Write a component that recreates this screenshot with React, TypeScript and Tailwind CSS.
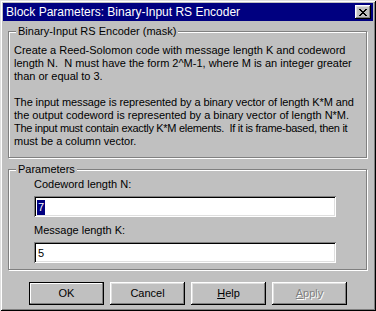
import type { ReactNode } from "react";

const font = "font-['Liberation_Sans',Arial,sans-serif]";

const raised =
  "shadow-[inset_-1px_-1px_0_#000,inset_1px_1px_0_#fff,inset_-2px_-2px_0_#808080,inset_2px_2px_0_#dfdfdf]";

const lines = [
  "Create a Reed-Solomon code with message length K and codeword",
  "length N.  N must have the form 2^M-1, where M is an integer greater",
  "than or equal to 3.",
  "",
  "The input message is represented by a binary vector of length K*M and",
  "the output codeword is represented by a binary vector of length N*M.",
  "The input must contain exactly K*M elements.  If it is frame-based, then it",
  "must be a column vector.",
];

function GroupBox({
  label,
  className,
  children,
}: {
  label: string;
  className: string;
  children: ReactNode;
}) {
  return (
    <div
      className={`relative ml-[5px] mr-[6px] border border-[#808080] shadow-[1px_1px_0_#fff,inset_1px_1px_0_#fff] ${className}`}
    >
      <span className="absolute left-[7px] top-[-7px] bg-[#c0c0c0] px-[2px] leading-[13px]">
        {label}
      </span>
      {children}
    </div>
  );
}

function Field({ label, value, selected }: { label: string; value: string; selected?: boolean }) {
  return (
    <div className="ml-[25px] w-[302px]">
      <div className="leading-[13px]">{label}</div>
      <div className="mt-[5px] h-[21px] bg-white px-[3px] pt-[3px] shadow-[inset_1px_1px_0_#808080,inset_-1px_-1px_0_#fff,inset_2px_2px_0_#000,inset_-2px_-2px_0_#dfdfdf]">
        <span
          className={`inline-block h-[15px] px-[1px] leading-[15px] ${
            selected ? "bg-[#000080] text-white" : "text-black"
          }`}
        >
          {value}
        </span>
      </div>
    </div>
  );
}

function Button({
  children,
  isDefault,
  disabled,
}: {
  children: ReactNode;
  isDefault?: boolean;
  disabled?: boolean;
}) {
  return (
    <div
      className={`flex h-[23px] w-[75px] items-center justify-center ${
        isDefault
          ? "border border-black shadow-[inset_-1px_-1px_0_#808080,inset_1px_1px_0_#fff]"
          : raised
      } ${disabled ? "text-[#808080] [text-shadow:1px_1px_0_#fff]" : "text-black"}`}
    >
      {children}
    </div>
  );
}

export default function App() {
  return (
    <div
      className={`flex h-[311px] w-[376px] flex-col bg-[#c0c0c0] p-[3px] text-[11px] text-black ${font} shadow-[inset_1px_1px_0_#dfdfdf,inset_-1px_-1px_0_#000,inset_2px_2px_0_#fff,inset_-2px_-2px_0_#808080]`}
    >
      <div className="flex h-[18px] items-center justify-between bg-[#000080] pl-[3px] pr-[2px] text-white">
        <span className="text-[12px] leading-[18px]">Block Parameters: Binary-Input RS Encoder</span>
        <div className={`flex h-[14px] w-[16px] items-center justify-center bg-[#c0c0c0] ${raised}`}>
          <svg width="8" height="7" viewBox="0 0 8 7" shapeRendering="crispEdges">
            <path
              d="M0 0h2v1h-2zM6 0h2v1h-2zM1 1h2v1h-2zM5 1h2v1h-2zM2 2h4v1h-4zM3 3h2v1h-2zM2 4h4v1h-4zM1 5h2v1h-2zM5 5h2v1h-2zM0 6h2v1h-2zM6 6h2v1h-2z"
              fill="#000"
            />
          </svg>
        </div>
      </div>

      <GroupBox label="Binary-Input RS Encoder (mask)" className="mt-[10px] h-[127px] pl-[5px] pt-[12px]">
        {lines.map((line, i) => (
          <div
            key={i}
            className={`h-[13px] whitespace-pre leading-[13px] ${
              i === 6 ? "tracking-[-0.3px]" : i === 4 ? "tracking-[-0.1px]" : ""
            }`}
          >
            {line}
          </div>
        ))}
      </GroupBox>

      <GroupBox label="Parameters" className="mt-[11px] h-[101px] pt-[8px]">
        <Field label="Codeword length N:" value="7" selected />
        <div className="mt-[7px]">
          <Field label="Message length K:" value="5" />
        </div>
      </GroupBox>

      <div className="ml-[26px] mt-[12px] flex gap-[6px]">
        <Button isDefault>OK</Button>
        <Button>Cancel</Button>
        <Button>
          <span>
            <span className="underline">H</span>elp
          </span>
        </Button>
        <Button disabled>
          <span>
            <span className="underline">A</span>pply
          </span>
        </Button>
      </div>
    </div>
  );
}
